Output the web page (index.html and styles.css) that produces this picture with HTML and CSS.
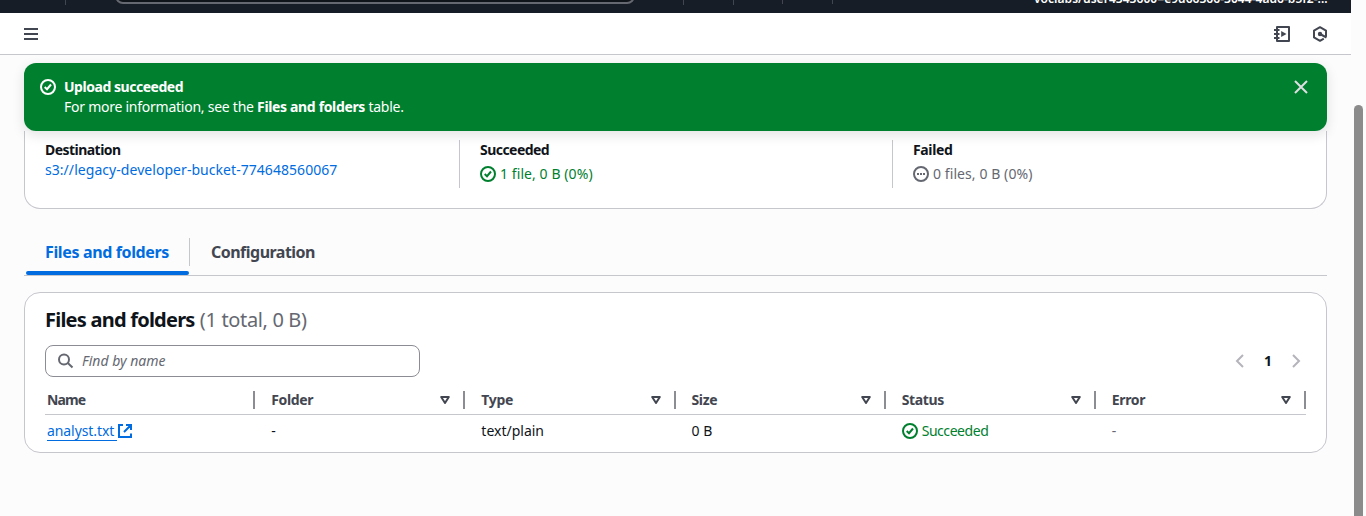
FILE: index.html
```html
<!DOCTYPE html>
<html lang="en">
<head>
<meta charset="utf-8">
<title>Upload: status</title>
<link rel="stylesheet" href="styles.css">
</head>
<body>
<svg class="defs" aria-hidden="true">
  <symbol id="check" viewBox="0 0 16 16"><circle cx="8" cy="8" r="7" fill="none" stroke="currentColor" stroke-width="2"/><path d="m4.700 8 2.300 2.200 4-4.700" fill="none" stroke="currentColor" stroke-width="2"/></symbol>
  <symbol id="sort" viewBox="0 0 10 8"><path d="M1.200 1h7.600L5 7z" fill="none" stroke="currentColor" stroke-width="2" stroke-linejoin="round"/></symbol>
</svg>
<div class="app">
  <div class="page">
    <header class="topnav">
      <span class="rule r1"></span><div class="global-search"></div>
      <span class="rule r2"></span><span class="rule r3"></span><span class="rule r4"></span><span class="rule r5"></span>
      <span class="account">voclabs/user4343600=e9d66366-3044-4ad6-b5f2-...</span>
    </header>
    <div class="toolbar">
      <svg class="burger" viewBox="0 0 14 12"><path d="M0 1h14M0 6h14M0 11h14" stroke="currentColor" stroke-width="2"/></svg>
      <div class="tools">
        <svg class="icon" viewBox="0 0 16 16" fill="none" stroke="currentColor" stroke-width="2"><path d="M3 15V1h12v14z" stroke-linejoin="round"/><path d="M0 4h5.500M0 8h5.500M0 12h5.500" stroke-width="1.800"/><path d="M7.200 5v6L12.500 8z" fill="currentColor" stroke="none"/></svg>
        <svg class="icon" viewBox="0 0 16 16" fill="none" stroke="currentColor" stroke-width="2"><path d="M14 10.800V4.600L8 1.200 2 4.600v6.800l6 3.400 3.800-2.200" stroke-linejoin="round"/><circle cx="8" cy="8" r="2.200" fill="currentColor" stroke="none"/><path d="m8 8 6.500 3.500"/></svg>
      </div>
    </div>
    <main class="content">
      <section class="flash">
        <svg class="icon"><use href="#check"/></svg>
        <div class="flash-text"><div><b class="t-up">Upload succeeded</b></div><div class="t-info">For more information, see the <b>Files and folders</b> table.</div></div>
        <svg class="close" viewBox="0 0 14 14"><path d="m1 1 12 12M13 1 1 13" stroke="currentColor" stroke-width="2"/></svg>
      </section>
      <section class="summary">
        <div class="fact"><b>Destination</b><a class="uri">s3://legacy-developer-bucket-774648560067</a></div>
        <div class="fact"><b>Succeeded</b><span class="status ok"><svg class="icon"><use href="#check"/></svg><span class="count">1 file, 0 B (0%)</span></span></div>
        <div class="fact"><b class="failed">Failed</b><span class="status idle"><svg class="icon" viewBox="0 0 16 16"><circle cx="8" cy="8" r="7" fill="none" stroke="currentColor" stroke-width="2"/><path d="M4 7h2v2H4zM7 7h2v2H7zM10 7h2v2h-2z" fill="currentColor"/></svg><span class="count">0 files, 0 B (0%)</span></span></div>
      </section>
      <nav class="tabs"><div class="tab active"><span>Files and folders</span></div><div class="tab config"><span>Configuration</span></div></nav>
      <section class="panel">
        <h2><span class="title">Files and folders</span> <span class="total">(1 total, 0 B)</span></h2>
        <div class="controls">
          <div class="search"><svg class="icon" viewBox="0 0 16 16" fill="none" stroke="currentColor" stroke-width="2"><circle cx="6" cy="6.500" r="5"/><path d="m9.800 10 4.700 4.500"/></svg><span>Find by name</span></div>
          <div class="pager"><svg viewBox="0 0 9 14"><path d="M8 1 2 7l6 6"/></svg><b>1</b><svg viewBox="0 0 9 14"><path d="m1 1 6 6-6 6"/></svg></div>
        </div>
        <div class="grid head">
          <div><span class="name">Name</span></div>
          <div><span>Folder</span><svg><use href="#sort"/></svg></div>
          <div><span>Type</span><svg><use href="#sort"/></svg></div>
          <div><span>Size</span><svg><use href="#sort"/></svg></div>
          <div><span>Status</span><svg><use href="#sort"/></svg></div>
          <div><span>Error</span><svg><use href="#sort"/></svg></div>
        </div>
        <div class="grid row">
          <div><a class="file">analyst.txt</a><svg class="ext" viewBox="0 0 14 14" fill="none" stroke="currentColor" stroke-width="2"><path d="M5 1H1v12h12V9.500M8 1h5v5M13 1 6 8"/></svg></div>
          <div>-</div>
          <div>text/plain</div>
          <div>0 B</div>
          <div class="ok"><svg class="icon"><use href="#check"/></svg><span class="result">Succeeded</span></div>
          <div class="muted">-</div>
        </div>
      </section>
    </main>
  </div>
  <div class="scroll"><div class="thumb"></div></div>
</div>
</body>
</html>
```
FILE: styles.css
```css
* { box-sizing: border-box; }
body { margin: 0; background: #fcfcfd; color: #0f141a; font: 14px/20px "Noto Sans", "Open Sans", sans-serif; overflow: hidden; }
b { font-weight: 700; }
span, a, b { white-space: nowrap; }
svg { flex: none; display: block; }
.defs { width: 0; height: 0; position: absolute; }
.icon { width: 16px; height: 16px; }
.app { display: flex; height: 516px; }
.page { width: 1351px; }
.scroll { width: 15px; height: 516px; padding: 105px 3px 0; }
.thumb { width: 9px; height: 411px; border-radius: 5px 5px 0 0; background: #8b8b8b; }
.topnav { height: 13px; background: #161d26; display: flex; align-items: flex-start; overflow: hidden; }
.rule { flex: none; width: 1px; height: 5px; background: #424650; }
.r1 { margin-left: 65px; }
.global-search { flex: none; width: 520px; height: 32px; margin: -28px 0 0 49px; border: 2px solid #656871; border-radius: 8px; background: #0f141a; }
.r2 { margin-left: 48px; }
.r3 { margin-left: 49px; }
.r4, .r5 { height: 4px; }
.r4 { margin-left: 48px; }
.r5 { margin-left: 49px; }
.account { margin: -10px 0 0 201px; width: 300px; color: #fff; font-size: 12px; line-height: 18px; font-weight: 600; letter-spacing: .04px; }
.toolbar { height: 42px; background: #fff; border-bottom: 1px solid #c6c6cd; color: #424650; display: flex; align-items: center; justify-content: space-between; padding: 0 23px 0 24px; }
.burger { width: 14px; height: 12px; margin-top: 1px; }
.tools { display: flex; gap: 22px; }
.content { padding: 8px 24px 0; }
.flash { position: relative; height: 68px; border-radius: 12px; background: #00802f; color: #fff; display: flex; padding: 14px 19px 0 16px; gap: 8px; box-shadow: 0 4px 12px 1px rgba(0, 7, 22, .1); }
.flash .icon { margin-top: 2px; }
.flash-text { flex: 1; }
.t-up { letter-spacing: -.47px; }
.t-info { letter-spacing: -.25px; }
.t-info b { letter-spacing: -.35px; }
.close { width: 14px; height: 14px; margin-top: 3px; color: #dedee3; }
.summary { height: 78px; background: #fff; border: 1px solid #c6c6cd; border-top: 0; border-radius: 0 0 16px 16px; padding: 9px 20px 20px; display: flex; }
.fact { flex: none; width: 433px; height: 48px; display: flex; flex-direction: column; }
.fact:first-child { width: 414px; }
.fact:last-child { flex: 1; width: auto; }
.fact + .fact { border-left: 1px solid #c6c6cd; padding-left: 20px; }
.fact b { letter-spacing: -.54px; }
.fact .failed { letter-spacing: -.35px; }
.uri { letter-spacing: .05px; }
.count { letter-spacing: .08px; }
a, .active { color: #006ce0; }
.ok { color: #00802f; }
.idle, .muted { color: #656871; }
.status { display: flex; align-items: center; gap: 4px; margin-top: 4px; }
.tabs { height: 47px; margin-top: 20px; border-bottom: 1px solid #c6c6cd; display: flex; padding-left: 2px; color: #424650; font-size: 16px; font-weight: 700; letter-spacing: -.36px; }
.tab { padding: 13px 22px 0; }
.config { letter-spacing: -.52px; }
.active { width: 163px; padding-left: 19px; margin-bottom: -1px; position: relative; }
.active::before { content: ""; position: absolute; left: 0; bottom: 1px; width: 163px; height: 4px; border-radius: 2px; background: #006ce0; }
.active::after { content: ""; position: absolute; left: 163px; top: 9px; width: 1px; height: 28px; background: #c6c6cd; }
.panel { height: 161px; margin-top: 16px; background: #fff; border: 1px solid #c6c6cd; border-radius: 16px; padding: 15px 20px 0; }
h2 { margin: 0; font-size: 20px; line-height: 24px; font-weight: 700; white-space: nowrap; }
.title { letter-spacing: -.77px; }
.total { color: #656871; font-weight: 400; letter-spacing: -.35px; }
.controls { display: flex; justify-content: space-between; margin-top: 13px; }
.search { width: 375px; height: 32px; border: 1px solid #8c8c94; border-radius: 8px; display: flex; align-items: center; gap: 8px; padding-left: 12px; color: #656871; font-style: italic; }
.pager { display: flex; align-items: center; width: 66px; justify-content: space-between; margin-right: 5px; }
.pager svg { width: 9px; height: 14px; fill: none; stroke: #b4b4bb; stroke-width: 2; }
.grid { display: grid; grid-template-columns: repeat(6, 1fr); }
.grid > div { display: flex; align-items: center; padding-left: 16px; }
.grid > div:first-child { padding-left: 2px; }
.head { height: 38px; border-bottom: 1px solid #c6c6cd; font-weight: 700; line-height: 18px; color: #424650; padding: 14px 0 5px; letter-spacing: -.35px; }
.head > div { height: 18px; border-right: 2px solid #8c8c94; justify-content: space-between; padding-right: 13px; }
.head .name { letter-spacing: -.9px; }
.head svg { width: 10px; height: 8px; }
.row { height: 32px; }
.file { line-height: 19px; letter-spacing: -.08px; border-bottom: 1px solid #006ce0; padding-right: 3px; }
.ext { width: 14px; height: 14px; color: #006ce0; margin-left: 1px; }
.row .icon { margin-right: 4px; }
.result { letter-spacing: -.45px; }
```
